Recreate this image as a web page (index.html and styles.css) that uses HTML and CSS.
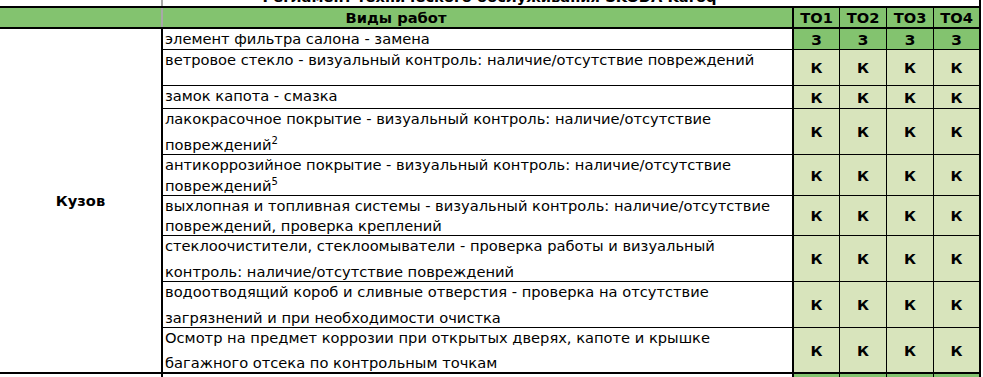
FILE: index.html
```html
<!DOCTYPE html>
<html lang="ru">
<head>
<meta charset="utf-8">
<title>Регламент технического обслуживания SKODA Karoq</title>
<link rel="stylesheet" href="styles.css">
</head>
<body>
<div class="sheet">
  <div class="title"><span class="title-text">Регламент технического обслуживания SKODA Karoq</span></div>

  <div class="head head-works">Виды работ</div>
  <div class="head to">ТО1</div>
  <div class="head to">ТО2</div>
  <div class="head to">ТО3</div>
  <div class="head to to-last">ТО4</div>

  <div class="group">Кузов</div>

  <div class="desc"><div class="ln">элемент фильтра салона - замена</div></div>
  <div class="mark dark">З</div><div class="mark dark">З</div><div class="mark dark">З</div><div class="mark dark last">З</div>

  <div class="desc"><div class="ln">ветровое стекло - визуальный контроль: наличие/отсутствие повреждений</div></div>
  <div class="mark">К</div><div class="mark">К</div><div class="mark">К</div><div class="mark last">К</div>

  <div class="desc"><div class="ln">замок капота - смазка</div></div>
  <div class="mark">К</div><div class="mark">К</div><div class="mark">К</div><div class="mark last">К</div>

  <div class="desc"><div class="ln">лакокрасочное покрытие - визуальный контроль: наличие/отсутствие</div><div class="ln">повреждений<sup>2</sup></div></div>
  <div class="mark">К</div><div class="mark">К</div><div class="mark">К</div><div class="mark last">К</div>

  <div class="desc"><div class="ln">антикоррозийное покрытие - визуальный контроль: наличие/отсутствие</div><div class="ln">повреждений<sup>5</sup></div></div>
  <div class="mark">К</div><div class="mark">К</div><div class="mark">К</div><div class="mark last">К</div>

  <div class="desc"><div class="ln">выхлопная и топливная системы - визуальный контроль: наличие/отсутствие</div><div class="ln">повреждений, проверка креплений</div></div>
  <div class="mark">К</div><div class="mark">К</div><div class="mark">К</div><div class="mark last">К</div>

  <div class="desc"><div class="ln">стеклоочистители, стеклоомыватели - проверка работы и визуальный</div><div class="ln">контроль: наличие/отсутствие повреждений</div></div>
  <div class="mark">К</div><div class="mark">К</div><div class="mark">К</div><div class="mark last">К</div>

  <div class="desc"><div class="ln">водоотводящий короб и сливные отверстия - проверка на отсутствие</div><div class="ln">загрязнений и при необходимости очистка</div></div>
  <div class="mark">К</div><div class="mark">К</div><div class="mark">К</div><div class="mark last">К</div>

  <div class="desc end"><div class="ln">Осмотр на предмет коррозии при открытых дверях, капоте и крышке</div><div class="ln">багажного отсека по контрольным точкам</div></div>
  <div class="mark end">К</div><div class="mark end">К</div><div class="mark end">К</div><div class="mark last end">К</div>

  <div class="blank left"></div>
  <div class="blank"></div>
  <div class="mark dark"></div><div class="mark dark"></div><div class="mark dark"></div><div class="mark dark last"></div>
</div>
</body>
</html>
```

FILE: styles.css
```css
html, body {
  margin: 0;
  padding: 0;
  background: #ffffff;
}

body {
  width: 983px;
  height: 377px;
  overflow: hidden;
  font-family: "DejaVu Sans", Verdana, sans-serif;
  font-size: 14.67px;
  color: #000000;
}

.sheet {
  display: grid;
  width: 981px;
  grid-template-columns: 163px 631px 46px 47px 47px 47px;
  grid-template-rows: 8px 21px 21px 36px 23px 46px 41px 40px 46px 46px 46px 20px;
}

.sheet > div {
  box-sizing: border-box;
}

.title {
  grid-column: 1 / 7;
  border-right: 2px solid #000;
  border-bottom: 2px solid #000;
  overflow: hidden;
  text-align: center;
  background: linear-gradient(to right, transparent 161px, #a8a8a8 161px, #a8a8a8 163px, transparent 163px), #ffffff;
}

.title-text {
  display: block;
  margin-top: -12px;
  line-height: 18px;
  font-weight: bold;
  font-size: 14.67px;
  white-space: nowrap;
}

.head {
  background: #83c36f;
  border-bottom: 2px solid #000;
  font-weight: bold;
  display: flex;
  align-items: center;
  justify-content: center;
  line-height: 19px;
}

.head-works {
  grid-column: 1 / 3;
  border-right: 2px solid #000;
  background: linear-gradient(to right, transparent 161px, #a8a8a8 161px, #a8a8a8 163px, transparent 163px), #83c36f;
}

.to {
  border-right: 1px solid #000;
}

.to-last,
.mark.last {
  border-right: 2px solid #000;
}

.group {
  grid-column: 1;
  grid-row: 3 / 12;
  border-right: 2px solid #000;
  border-bottom: 2px solid #000;
  display: flex;
  align-items: center;
  justify-content: center;
  font-weight: bold;
}

.desc {
  border-right: 2px solid #000;
  border-bottom: 1px solid #000;
  padding-left: 2px;
  display: flex;
  flex-direction: column;
  justify-content: space-between;
  line-height: 19px;
  white-space: nowrap;
}

.ln sup {
  font-size: 10px;
  line-height: 0;
  vertical-align: 6px;
}

.mark {
  background: #d8e4bc;
  border-right: 1px solid #000;
  border-bottom: 1px solid #000;
  display: flex;
  align-items: center;
  justify-content: center;
  font-weight: bold;
  line-height: 19px;
}

.mark.dark {
  background: #83c36f;
}

.end {
  border-bottom-width: 2px;
}

.blank {
  border-right: 2px solid #000;
}
```
